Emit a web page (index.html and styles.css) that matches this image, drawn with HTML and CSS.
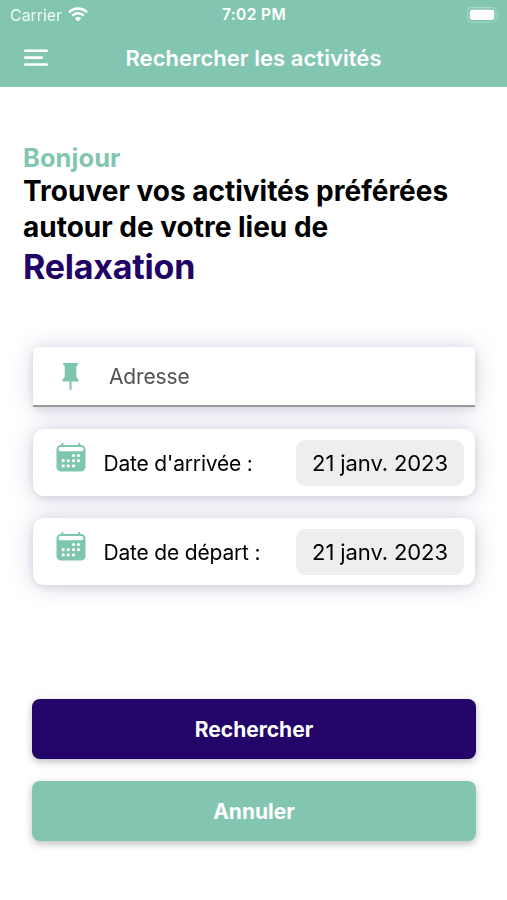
FILE: index.html
```html
<!DOCTYPE html>
<html lang="fr">
<head>
    <meta charset="UTF-8">
    <meta name="viewport" content="width=device-width, initial-scale=1.0">
    <title>Rechercher les activités</title>
    <link rel="stylesheet" href="styles.css">
</head>
<body>

    <header class="header">
        <div class="status-bar">
            <div class="status-left">
                <span class="carrier">Carrier</span>
                <svg class="wifi" width="20" height="15" viewBox="0 0 20 15">
                    <path d="M1 5.3a12.8 12.8 0 0 1 18 0" fill="none" stroke="#fff" stroke-width="2.6"/>
                    <path d="M4.2 8.6a8.2 8.2 0 0 1 11.6 0" fill="none" stroke="#fff" stroke-width="2.5"/>
                    <path d="M10 14.6l-3.3-3.3a4.7 4.7 0 0 1 6.6 0z" fill="#fff"/>
                </svg>
            </div>
            <span class="time">7:02 PM</span>
            <div class="status-right">
                <svg width="33" height="16" viewBox="0 0 33 16">
                    <rect x="0.6" y="0.6" width="28.6" height="14.6" rx="4.2" fill="none" stroke="#fff" stroke-opacity="0.3" stroke-width="1.1"/>
                    <rect x="2.8" y="2.8" width="24.4" height="10.2" rx="2.4" fill="#fff"/>
                    <path d="M31 5.4c1.6.8 1.6 4.2 0 5z" fill="#fff" fill-opacity="0.3"/>
                </svg>
            </div>
        </div>
        <nav class="nav-bar">
            <svg class="menu-icon" width="24" height="18" viewBox="0 0 24 18">
                <path d="M1.3 1.7h21.4M1.3 8.6h16.4M1.3 15.5h21.4" stroke="#fff" stroke-width="2.6" stroke-linecap="round"/>
            </svg>
            <h1 class="nav-title">Rechercher les activités</h1>
        </nav>
    </header>

    <main class="content">
        <section class="intro">
            <p class="hello">Bonjour</p>
            <p class="intro-text">Trouver vos activités préférées<br>autour de votre lieu de</p>
            <p class="relax">Relaxation</p>
        </section>

        <form class="search-form">
            <div class="field field-address">
                <svg class="pin" width="17" height="28" viewBox="0 0 17 28">
                    <path d="M1.2 0h14.6v2.600c-1 0-1.500.6-1.500 1.400v9.600c0 1 2.500 2.600 2.500 4.900H9.500V27h-2v-8.500H.2c0-2.300 2.500-3.900 2.500-4.900V4c0-.8-.5-1.400-1.500-1.400z" fill="#7fc6ae"/>
                </svg>
                <span class="placeholder">Adresse</span>
            </div>

            <div class="field field-date">
                <svg class="calendar" width="30" height="30" viewBox="0 0 30 30">
                    <path d="M5.400 0h2v2h14.800V0h2v2H25a4.500 4.500 0 0 1 4.500 4.500V24a4.500 4.500 0 0 1-4.500 4.500H5A4.500 4.500 0 0 1 .5 24V6.500A4.500 4.500 0 0 1 5 2h.4z" fill="#7fc6ae"/>
                    <rect x="2.600" y="4" width="24.800" height="4.200" rx="2" fill="#fff"/>
                    <g fill="#fff">
                        <circle cx="17.500" cy="12.500" r="1.600"/><circle cx="22.500" cy="12.500" r="1.600"/>
                        <circle cx="7.200" cy="17.700" r="1.600"/><circle cx="12.300" cy="17.700" r="1.600"/><circle cx="17.500" cy="17.700" r="1.600"/><circle cx="22.500" cy="17.700" r="1.600"/>
                        <circle cx="7.200" cy="22.900" r="1.600"/><circle cx="12.300" cy="22.900" r="1.600"/><circle cx="17.500" cy="22.900" r="1.600"/>
                    </g>
                </svg>
                <span class="label">Date d'arrivée :</span>
                <span class="date">21 janv. 2023</span>
            </div>

            <div class="field field-date">
                <svg class="calendar" width="30" height="30" viewBox="0 0 30 30">
                    <path d="M5.400 0h2v2h14.800V0h2v2H25a4.500 4.500 0 0 1 4.500 4.500V24a4.500 4.500 0 0 1-4.500 4.500H5A4.500 4.500 0 0 1 .5 24V6.500A4.500 4.500 0 0 1 5 2h.4z" fill="#7fc6ae"/>
                    <rect x="2.600" y="4" width="24.800" height="4.200" rx="2" fill="#fff"/>
                    <g fill="#fff">
                        <circle cx="17.500" cy="12.500" r="1.600"/><circle cx="22.500" cy="12.500" r="1.600"/>
                        <circle cx="7.200" cy="17.700" r="1.600"/><circle cx="12.300" cy="17.700" r="1.600"/><circle cx="17.500" cy="17.700" r="1.600"/><circle cx="22.500" cy="17.700" r="1.600"/>
                        <circle cx="7.200" cy="22.900" r="1.600"/><circle cx="12.300" cy="22.900" r="1.600"/><circle cx="17.500" cy="22.900" r="1.600"/>
                    </g>
                </svg>
                <span class="label">Date de départ :</span>
                <span class="date">21 janv. 2023</span>
            </div>
        </form>

        <div class="actions">
            <button type="button" class="btn btn-search">Rechercher</button>
            <button type="button" class="btn btn-cancel">Annuler</button>
        </div>
    </main>

</body>
</html>
```
FILE: styles.css
```css
* {
    box-sizing: border-box;
}
body {
    font-family: Inter, "Liberation Sans", sans-serif;
    margin: 0;
    padding: 0;
    background-color: #fff;
    color: #000;
    height: 900px;
    overflow: hidden;
}
.header {
    background-color: #82c6b1;
    color: #fff;
    height: 87px;
}
.status-bar {
    display: grid;
    grid-template-columns: 1fr auto 1fr;
    align-items: center;
    height: 29px;
    padding: 0 7px 0 10px;
}
.status-left {
    display: flex;
    align-items: center;
    gap: 6px;
}
.carrier {
    font-size: 16px;
    letter-spacing: -0.05px;
    opacity: 0.9;
}
.time {
    font-size: 15.5px;
    font-weight: 600;
    letter-spacing: 0.4px;
    margin-right: 2px;
}
.status-right {
    display: flex;
    justify-content: flex-end;
}
.nav-bar {
    display: grid;
    grid-template-columns: 60px 1fr 60px;
    align-items: center;
    height: 58px;
}
.menu-icon {
    margin-left: 24px;
}
.nav-title {
    margin: 0;
    font-size: 22px;
    font-weight: 600;
    letter-spacing: 0.05px;
    text-align: center;
    white-space: nowrap;
}
.content {
    padding: 57px 31px 0 32px;
}
.intro {
    margin-left: -9px;
    height: 203px;
    white-space: nowrap;
}
.intro p {
    margin: 0;
}
.hello {
    color: #82c6b1;
    font-size: 25.5px;
    font-weight: 700;
    letter-spacing: 0.05px;
    line-height: 28px;
}
.intro-text {
    margin-left: -0.5px;
    padding-top: 1px;
    font-size: 28px;
    font-weight: 700;
    line-height: 36px;
}
.relax {
    color: #210368;
    font-size: 34px;
    font-weight: 700;
    letter-spacing: -0.2px;
    line-height: 43px;
}
/* one shadow for the whole stack, so that cards do not shade each other */
.search-form {
    display: flex;
    flex-direction: column;
    gap: 22px;
    padding: 0 1px;
    filter: drop-shadow(0 2px 3px rgba(0, 0, 0, 0.08)) drop-shadow(0 1px 11px rgba(50, 35, 120, 0.21));
}
.field {
    display: flex;
    background-color: #fff;
    border-radius: 11px;
}
.field-address {
    height: 60px;
    align-items: center;
    padding-left: 29px;
    border-bottom: 2px solid #98989c;
    border-radius: 5px 5px 0 0;
}
.pin {
    margin-top: 2px;
}
.placeholder {
    margin-left: 30px;
    color: #515156;
    font-size: 21px;
    letter-spacing: -0.15px;
}
.field-date {
    height: 67px;
    padding: 11px 11px 0 23px;
}
.calendar {
    margin-top: 3px;
}
.label {
    flex: 1;
    margin-left: 17.5px;
    font-size: 21px;
    letter-spacing: -0.18px;
    line-height: 48px;
    white-space: nowrap;
}
.date {
    width: 168px;
    height: 46px;
    border-radius: 9px;
    background-color: #eeeeef;
    font-size: 22px;
    letter-spacing: -0.1px;
    line-height: 46px;
    text-align: center;
    white-space: nowrap;
}
.actions {
    display: flex;
    flex-direction: column;
    gap: 22px;
    margin-top: 114px;
}
.btn {
    height: 60px;
    border: none;
    border-radius: 8px;
    color: #fff;
    font-family: inherit;
    font-size: 21px;
    font-weight: 700;
    box-shadow: 0 3px 7px rgba(0, 0, 0, 0.22), 0 1px 18px rgba(0, 0, 0, 0.04);
}
.btn-search {
    background-color: #230469;
}
.btn-cancel {
    background-color: #82c6b1;
}
```
